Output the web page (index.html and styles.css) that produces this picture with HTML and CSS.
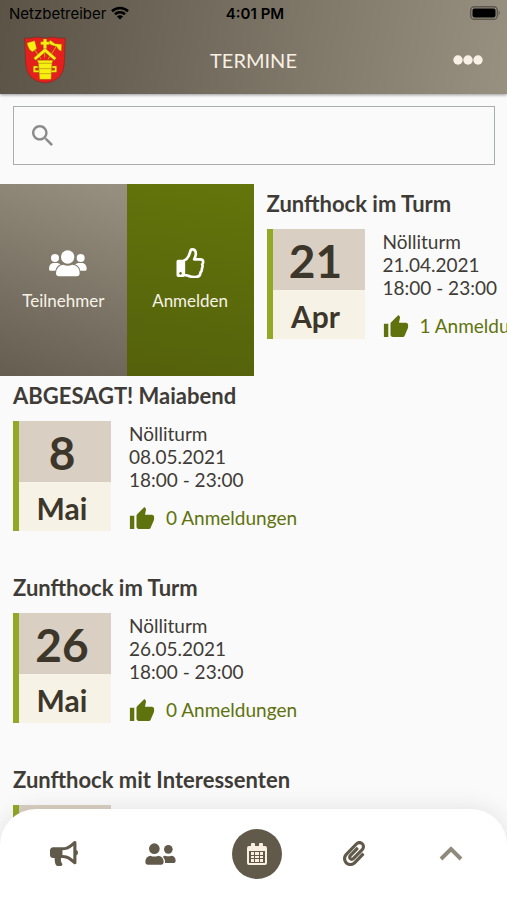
FILE: index.html
```html
<!DOCTYPE html>
<html lang="de">
<head>
  <meta charset="UTF-8" />
  <meta name="viewport" content="width=device-width, initial-scale=1.0"/>
  <title>Termine</title>
  <link rel="stylesheet" href="styles.css">
</head>
<body>

  <!-- shared icons -->
  <svg class="sprite" aria-hidden="true">
    <symbol id="thumb" viewBox="1 1 22 20">
      <path d="M1 21h4V9H1v12zm22-11c0-1.1-.9-2-2-2h-6.31l.95-4.57.03-.32c0-.41-.17-.79-.44-1.06L14.17 1 7.59 7.59C7.22 7.95 7 8.45 7 9v10c0 1.1.9 2 2 2h9c.83 0 1.54-.5 1.84-1.22l3.02-7.05c.09-.23.14-.47.14-.73v-2z"/>
    </symbol>
  </svg>

  <header class="header">
    <div class="status">
      <div class="carrier">
        <span>Netzbetreiber</span>
        <svg class="wifi" viewBox="0 0 18 14" aria-hidden="true">
          <path d="M1 5.2a11.5 11.5 0 0 1 16 0M4 8.2a7.2 7.2 0 0 1 10 0" fill="none" stroke="#000" stroke-width="2.6"/>
          <path d="M9 13.6 5.9 10.5a4.4 4.4 0 0 1 6.2 0z"/>
        </svg>
      </div>
      <span class="time">4:01 PM</span>
      <svg class="battery" viewBox="0 0 31 14" aria-hidden="true">
        <rect x=".7" y=".7" width="26.6" height="12.6" rx="3.6" fill="none" stroke="#5d584e" stroke-width="1.4"/>
        <rect x="2.5" y="2.5" width="23" height="9" rx="2"/>
        <path d="M28.6 4.6a3 3 0 0 1 0 4.8z" fill="#5d584e"/>
      </svg>
    </div>
    <div class="titlebar">
      <svg class="crest" viewBox="26 16 126 142" aria-label="Zunftwappen" role="img">
        <path d="M28 21q20 2 35-3 26 6 52 0 15 5 35 3l-3 76q-2 54-58 59-55-5-58-59z" fill="#e5201c" stroke="#7d2a20" stroke-width="2"/>
        <g stroke="#c7a812" stroke-width="3" fill="none">
          <path d="m53 49 24 35M123 46 98 85M88 54v25"/>
        </g>
        <g fill="#f8ee10" stroke="#877512" stroke-width="1">
          <path d="m35 36 23-7 6 24-12 9q-12-3-17-26z"/>
          <path d="m98 35 7-7 14 10 20 2-1 20q-8-1-14-13l-18-6z"/>
          <path d="M84 24h10v8h8v9h-8v12H84V41h-8v-9h8z"/>
          <path d="m89 51 34 30-6 7-28-24-28 24-6-7z"/>
          <path d="M65 88h48l-3 7-3 50H73l-4-50z"/>
          <path d="M67 105H54v19h17v-6H60v-7h8zM111 105h13v19h-17v-6h11v-7h-8z"/>
        </g>
        <path d="M68 97h42M69 113h40M71 128h36" stroke="#a89012" stroke-width="2"/>
      </svg>
      <h1>TERMINE</h1>
      <button class="more" type="button" aria-label="Mehr">
        <svg viewBox="0 0 30 10"><circle cx="5" cy="5" r="4.7"/><circle cx="15" cy="5" r="4.7"/><circle cx="25" cy="5" r="4.7"/></svg>
      </button>
    </div>
  </header>

  <main class="content">
    <label class="search">
      <svg viewBox="3 3 17.5 17.5" aria-hidden="true">
        <path d="M15.5 14h-.79l-.28-.27C15.41 12.59 16 11.11 16 9.5 16 5.91 13.09 3 9.5 3S3 5.91 3 9.5 5.91 16 9.5 16c1.61 0 3.09-.59 4.23-1.57l.27.28v.79l5 4.99L20.49 19l-4.99-5zm-6 0C7.01 14 5 11.99 5 9.5S7.01 5 9.5 5 14 7.01 14 9.5 11.99 14 9.5 14z"/>
      </svg>
      <input type="search" aria-label="Suchen">
    </label>

    <section class="row">
      <div class="actions">
        <button class="action people" type="button">
          <svg viewBox="117 209 144 82" aria-hidden="true">
            <circle cx="203" cy="232" r="20"/>
            <path d="M190 255q13 6 27 0 21 2 22 25 0 10-9 10h-53q-9 0-9-10 2-23 22-25z"/>
            <circle cx="165" cy="235" r="12"/>
            <circle cx="242" cy="235" r="12"/>
            <path d="M159 250h14l9 4q-13 5-16 19h-15q-4 0-4-5 0-15 12-18zM234 250h14q12 3 12 18 0 5-4 5h-15q-3-14-16-19z"/>
          </svg>
          <span>Teilnehmer</span>
        </button>
        <button class="action join" type="button">
          <svg viewBox="526 205 86 90" aria-hidden="true">
            <path d="M549 243q10-4 14-13 3-7 5-13 1-8 6-8 11 0 11 13 0 7-5 17h18q9 0 9 8 0 5-3 7 3 7-1 13 1 7-4 11 0 14-15 14-13 0-22-4-6-2-13-2z" fill="none" stroke="#fff" stroke-width="8" stroke-linejoin="round"/>
            <path d="M532 240h15q5 0 5 5v42q0 5-5 5h-15q-5 0-5-5v-42q0-5 5-5zm7 37a4 4 0 1 0 .1 0z" fill-rule="evenodd"/>
          </svg>
          <span>Anmelden</span>
        </button>
      </div>
      <article class="event">
        <h2>Zunfthock im Turm</h2>
        <div class="details">
          <div class="date"><strong>21</strong><span>Apr</span></div>
          <div class="info">
            <p>Nölliturm</p>
            <p>21.04.2021</p>
            <p>18:00 - 23:00</p>
            <p class="joined"><svg aria-hidden="true"><use href="#thumb"/></svg>1 Anmeldungen</p>
          </div>
        </div>
      </article>
    </section>

    <section class="row">
      <article class="event">
        <h2>ABGESAGT! Maiabend</h2>
        <div class="details">
          <div class="date"><strong>8</strong><span>Mai</span></div>
          <div class="info">
            <p>Nölliturm</p>
            <p>08.05.2021</p>
            <p>18:00 - 23:00</p>
            <p class="joined"><svg aria-hidden="true"><use href="#thumb"/></svg>0 Anmeldungen</p>
          </div>
        </div>
      </article>
    </section>

    <section class="row">
      <article class="event">
        <h2>Zunfthock im Turm</h2>
        <div class="details">
          <div class="date"><strong>26</strong><span>Mai</span></div>
          <div class="info">
            <p>Nölliturm</p>
            <p>26.05.2021</p>
            <p>18:00 - 23:00</p>
            <p class="joined"><svg aria-hidden="true"><use href="#thumb"/></svg>0 Anmeldungen</p>
          </div>
        </div>
      </article>
    </section>

    <section class="row">
      <article class="event">
        <h2>Zunfthock mit Interessenten</h2>
        <div class="details">
          <div class="date"></div>
        </div>
      </article>
    </section>
  </main>

  <nav class="tabs">
    <a href="#" aria-label="News">
      <svg class="w28" viewBox="0 0 576 512"><path d="M576 240c0-23.63-12.95-44.04-32-55.12V32.01C544 23.26 537.02 0 512 0c-7.12 0-14.19 2.38-19.98 7.02l-85.03 68.03C364.28 109.19 310.66 128 256 128H64c-35.35 0-64 28.65-64 64v96c0 35.35 28.65 64 64 64h33.7c-1.39 10.48-2.18 21.14-2.18 32 0 39.77 9.26 77.35 25.56 110.94 5.19 10.69 16.52 17.06 28.4 17.06h74.28c26.05 0 41.69-29.84 25.9-50.56-16.4-21.52-26.15-48.36-26.15-77.44 0-11.11 1.62-21.79 4.41-32H256c54.66 0 108.28 18.81 150.98 52.95l85.03 68.03a32.023 32.023 0 0 0 19.98 7.02c24.92 0 32-22.78 32-32V295.13C563.05 284.04 576 263.63 576 240zm-96 141.42l-33.05-26.44C392.95 311.78 325.12 288 256 288v-96c69.12 0 136.95-23.78 190.95-66.98L480 98.58v282.84z"/></svg>
    </a>
    <a href="#" aria-label="Mitglieder">
      <svg class="w31" viewBox="442 252 93 66">
        <circle cx="470" cy="269" r="16"/>
        <path d="M458 290q12 5 24 0 16 2 16 20 0 7-7 7h-41q-7 0-7-7 0-18 15-20z"/>
        <circle cx="512" cy="271" r="13"/>
        <path d="M502 290q10 4 20 0 12 2 12 16 0 6-6 6h-26q1-11-6-19 2-3 6-3z"/>
      </svg>
    </a>
    <a class="active" href="#" aria-label="Termine" aria-current="page">
      <svg class="w20" viewBox="0 0 20 22">
        <path d="M5 0h2q1 0 1 1v2h4V1q0-1 1-1h2q1 0 1 1v2h2q2 0 2 2v15q0 2-2 2H2q-2 0-2-2V5q0-2 2-2h2V1q0-1 1-1zM2 8v12h16V8z" fill-rule="evenodd"/>
        <path d="M4 9h3v3H4zm4 0h4v3H8zm5 0h3v3h-3zM4 13h3v2H4zm4 0h4v2H8zm5 0h3v2h-3zm-9 3h3v3H4zm4 0h4v3H8zm5 0h3v3h-3z"/>
      </svg>
    </a>
    <a href="#" aria-label="Dokumente">
      <svg class="w22" viewBox="0 0 448 512"><path d="M43.246 466.142c-58.43-60.289-57.341-157.511 1.386-217.581L254.392 34c44.316-45.332 116.351-45.336 160.671 0 43.89 44.894 43.943 117.329 0 162.276L232.214 383.128c-29.855 30.537-78.633 30.111-107.982-.998-28.275-29.97-27.368-77.473 1.452-106.953l143.743-146.835c6.182-6.314 16.312-6.422 22.626-.241l22.861 22.379c6.315 6.182 6.422 16.312.241 22.626L171.427 319.927c-4.932 5.045-5.236 13.428-.648 18.292 4.372 4.634 11.245 4.711 15.688.165l182.849-186.851c19.613-20.062 19.613-52.725-.011-72.798-19.189-19.627-49.957-19.637-69.154 0L90.39 293.295c-34.763 35.56-35.299 93.12-1.191 128.313 34.01 35.093 88.985 35.137 123.058.286l172.06-175.999c6.177-6.319 16.307-6.433 22.626-.256l22.877 22.364c6.319 6.177 6.434 16.307.256 22.626l-172.06 175.998c-59.576 60.938-155.943 60.216-214.77-.485z"/></svg>
    </a>
    <a class="up" href="#" aria-label="Nach oben">
      <svg class="w24" viewBox="0 0 24 15"><path d="M2 13 12 3l10 10" fill="none" stroke="currentColor" stroke-width="4"/></svg>
    </a>
  </nav>

</body>
</html>
```

FILE: styles.css
```css
* {
  box-sizing: border-box;
}
body {
  margin: 0;
  height: 100vh;
  display: flex;
  flex-direction: column;
  overflow: hidden;
  position: relative;
  font-family: Lato, "Liberation Sans", sans-serif;
  font-size: 19px;
  color: #3f3c37;
  background: #fafafa;
}
h1, h2, p {
  margin: 0;
}
svg {
  display: block;
  fill: currentColor;
}
button {
  border: 0;
  padding: 0;
  background: none;
  font: inherit;
}
.sprite {
  position: absolute;
  width: 0;
  height: 0;
}

.header {
  flex: none;
  padding-bottom: 2px;
  background: linear-gradient(100deg, #5a5346, #989080);
  box-shadow: 0 1px 3px rgba(0, 0, 0, 0.4);
}
.status {
  display: grid;
  grid-template-columns: 1fr auto 1fr;
  align-items: center;
  height: 28px;
  padding: 0 6px 2px 9px;
  font-family: Inter, "Liberation Sans", sans-serif;
  font-size: 15px;
  color: #000;
}
.carrier {
  display: flex;
  align-items: center;
  gap: 5px;
}
.wifi {
  width: 18px;
  height: 14px;
}
.time {
  font-weight: 600;
}
.battery {
  width: 31px;
  height: 14px;
  justify-self: end;
}
.titlebar {
  display: grid;
  grid-template-columns: 1fr auto 1fr;
  align-items: center;
  height: 64px;
  padding: 0 24px;
  color: #f8f0e4;
}
.titlebar h1 {
  font-size: 20px;
  font-weight: 400;
}
.crest {
  width: 42px;
  height: 48px;
}
.more {
  justify-self: end;
  color: inherit;
}
.more svg {
  width: 30px;
  height: 10px;
}

.content {
  flex: 1;
  overflow-y: auto;
  scrollbar-width: none;
}
.search {
  display: flex;
  align-items: center;
  gap: 12px;
  height: 59px;
  margin: 12px 12px 19px 13px;
  padding: 0 18px;
  border: 1px solid #a9adac;
  color: #8b8b8b;
}
.search svg {
  width: 21px;
  height: 21px;
}
.search input {
  flex: 1;
  min-width: 0;
  border: 0;
  outline: 0;
  background: none;
  font: inherit;
}

.row {
  display: flex;
  height: 192px;
  overflow: hidden;
}
.actions {
  flex: none;
  display: flex;
  width: 50%;
}
.action {
  flex: 1;
  display: flex;
  flex-direction: column;
  align-items: center;
  justify-content: center;
  gap: 11px;
  font-size: 17px;
  line-height: 24px;
  color: #fff;
}
.action svg {
  height: 30px;
}
.action span {
  color: #f8f3e8;
}
.people {
  background: linear-gradient(20deg, #655d50, #989080);
}
.people svg {
  width: 48px;
}
.join {
  background: linear-gradient(10deg, #54610b, #63750b);
}
.join svg {
  width: 29px;
}

.event {
  flex: none;
  width: 100%;
  padding: 5px 13px;
}
.event h2 {
  margin-bottom: 10px;
  font-size: 22px;
  line-height: 30px;
  font-weight: 700;
}
.details {
  display: flex;
  gap: 18px;
}
.date {
  width: 98px;
  height: 110px;
  border-left: 6px solid #93a827;
  background: linear-gradient(#d9cfc2 61px, #f7f2e6 61px);
  color: #3d372b;
  text-align: center;
}
.date strong,
.date span {
  display: block;
  padding-right: 6px;
  font-weight: 700;
}
.date strong {
  font-size: 46px;
  line-height: 63px;
}
.date span {
  font-size: 30px;
  line-height: 48px;
}
.info {
  padding-top: 1px;
  line-height: 23px;
}
.joined {
  display: flex;
  align-items: center;
  gap: 11px;
  margin-top: 15px;
  color: #5f720d;
}
.joined svg {
  width: 26px;
  height: 22px;
}

.tabs {
  position: absolute;
  left: 0;
  right: 0;
  bottom: 0;
  display: grid;
  grid-template-columns: repeat(5, 1fr);
  align-items: center;
  justify-items: center;
  height: 91px;
  padding: 0 8px 2px 16px;
  border-radius: 36px 36px 0 0;
  background: #fff;
  box-shadow: 0 0 24px rgba(0, 0, 0, 0.1);
}
.tabs a {
  color: #615a4b;
}
.tabs .active {
  display: grid;
  place-items: center;
  width: 50px;
  height: 50px;
  border-radius: 50%;
  background: #615a4b;
  color: #f8efe0;
}
.tabs .up {
  color: #8f8a7c;
}
.w20 {
  width: 20px;
}
.w22 {
  width: 22px;
}
.w24 {
  width: 24px;
}
.w28 {
  width: 28px;
}
.w31 {
  width: 31px;
}
```
